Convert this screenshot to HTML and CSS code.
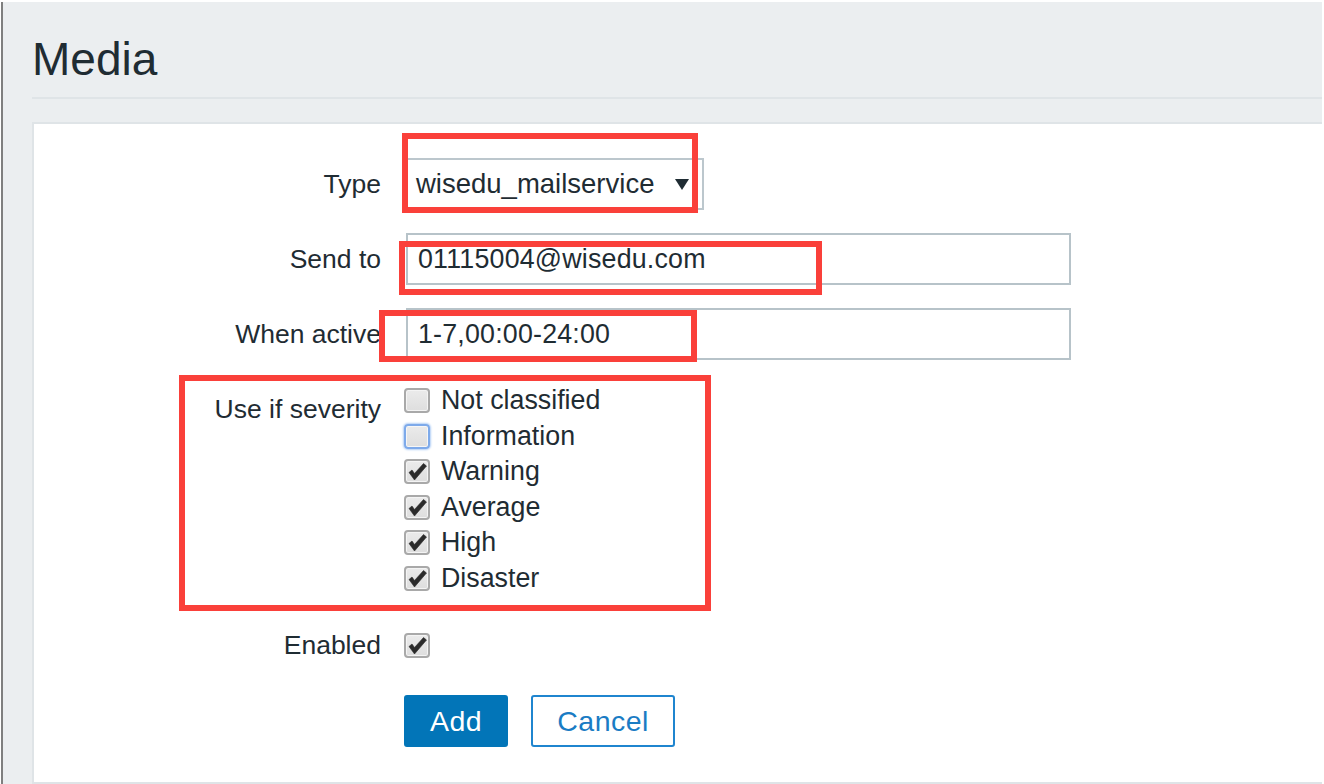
FILE: index.html
```html
<!DOCTYPE html>
<html>
<head>
  <meta charset="utf-8">
  <title>Media</title>
  <link rel="stylesheet" href="styles.css">
</head>
<body>
  <div class="page">
    <div class="header">
      <h1>Media</h1>
    </div>
    <div class="panel">
      <form class="form">
        <label class="lbl">Type</label>
        <div class="ctl">
          <div class="select">
            <span>wisedu_mailservice</span>
            <svg class="arrow" width="14" height="12" viewBox="0 0 14 12"><polygon points="0,1 14,1 7,12" fill="#1f2c33"/></svg>
          </div>
        </div>

        <label class="lbl">Send to</label>
        <div class="ctl"><input class="text" type="text" value="01115004@wisedu.com"></div>

        <label class="lbl">When active</label>
        <div class="ctl"><input class="text" type="text" value="1-7,00:00-24:00"></div>

        <label class="lbl">Use if severity</label>
        <ul class="severity">
          <li><span class="cb"></span>Not classified</li>
          <li><span class="cb focus"></span>Information</li>
          <li><span class="cb"><svg viewBox="2 2 22 21"><path d="M5 13.5 L8 11 L10.5 14.5 L19.5 4.5 L22.5 7 L10.5 21 Z"/></svg></span>Warning</li>
          <li><span class="cb"><svg viewBox="2 2 22 21"><path d="M5 13.5 L8 11 L10.5 14.5 L19.5 4.5 L22.5 7 L10.5 21 Z"/></svg></span>Average</li>
          <li><span class="cb"><svg viewBox="2 2 22 21"><path d="M5 13.5 L8 11 L10.5 14.5 L19.5 4.5 L22.5 7 L10.5 21 Z"/></svg></span>High</li>
          <li><span class="cb"><svg viewBox="2 2 22 21"><path d="M5 13.5 L8 11 L10.5 14.5 L19.5 4.5 L22.5 7 L10.5 21 Z"/></svg></span>Disaster</li>
        </ul>

        <label class="lbl">Enabled</label>
        <div class="ctl center">
          <span class="cb"><svg viewBox="2 2 22 21"><path d="M5 13.5 L8 11 L10.5 14.5 L19.5 4.5 L22.5 7 L10.5 21 Z"/></svg></span>
        </div>

        <div></div>
        <div class="buttons">
          <button type="button" class="btn btn-primary">Add</button>
          <button type="button" class="btn btn-alt">Cancel</button>
        </div>
      </form>
    </div>

    <!-- annotation boxes drawn over the form -->
    <div class="mark mark-type"></div>
    <div class="mark mark-send"></div>
    <div class="mark mark-when"></div>
    <div class="mark mark-severity"></div>
  </div>
</body>
</html>
```

FILE: styles.css
```css
html, body {
  margin: 0;
  padding: 0;
  background: #fff;
}
body {
  font-family: "Liberation Sans", Arial, sans-serif;
  color: #1f2c33;
}

.page {
  position: relative;
  margin: 2px 2px 0 1px;
  height: 782px;
  border-left: 2px solid #7f7f7f;
  background: #ebeef0;
  overflow: hidden;
}

.header {
  margin-left: 29px;
  padding: 34px 0 15px;
  border-bottom: 2px solid #dfe4e7;
}
.header h1 {
  margin: 0;
  font-size: 46px;
  line-height: 46px;
  font-weight: normal;
}

.panel {
  margin: 23px 0 0 29px;
  padding: 34px 0 35px;
  background: #fff;
  border: 2px solid #dfe4e7;
  border-right: none;
}

.form {
  display: grid;
  grid-template-columns: 347px 1fr;
  column-gap: 23px;
  row-gap: 23px;
  font-size: 26.5px;
}

.lbl {
  text-align: right;
  line-height: 52px;
  white-space: nowrap;
}

.ctl {
  display: flex;
  height: 52px;
}
.ctl.center {
  align-items: center;
}

.select {
  box-sizing: border-box;
  width: 300px;
  height: 52px;
  border: 2px solid #bcc7cd;
  padding: 0 13px 0 10px;
  display: flex;
  align-items: center;
  justify-content: space-between;
  font-size: 27.5px;
}

.text {
  box-sizing: border-box;
  width: 665px;
  height: 52px;
  margin: 0 0 0 2px;
  border: 2px solid #b7c3c9;
  border-radius: 0;
  padding: 0 10px;
  font-family: inherit;
  font-size: 26.8px;
  letter-spacing: 0.2px;
  color: #1f2c33;
  outline: none;
}

.severity {
  list-style: none;
  margin: 0;
  padding: 0;
  font-size: 26.8px;
}
.severity li {
  display: flex;
  align-items: center;
  gap: 11px;
  height: 35.5px;
}

.cb {
  box-sizing: border-box;
  width: 26px;
  height: 25px;
  border: 2px solid #a9a9a9;
  border-radius: 4px;
  background: linear-gradient(#ebebeb, #dedede);
  box-shadow: inset 0 0 0 1px #f4f4f4;
  display: inline-flex;
  flex: none;
}
.cb.focus {
  border-color: #7eaaea;
  box-shadow: 0 0 2px 1px #b4d0f6, inset 0 0 0 1px #f6f6f6;
}
.cb svg {
  width: 100%;
  height: 100%;
}
.cb path {
  fill: #2b2b2b;
  stroke: #2b2b2b;
  stroke-width: 0.6;
  stroke-linejoin: round;
}

.buttons {
  display: flex;
  gap: 23px;
  margin-top: 1px;
}

.btn {
  box-sizing: border-box;
  height: 52px;
  padding: 0 24px;
  border: 2px solid #0275b8;
  border-radius: 3px;
  font-family: inherit;
  font-size: 28.5px;
  letter-spacing: 0.5px;
  cursor: pointer;
}
.btn-primary {
  background: #0275b8;
  color: #fff;
}
.btn-alt {
  background: #fff;
  color: #1a7cc4;
  border-color: #1f85cf;
}

.mark {
  position: absolute;
  box-sizing: border-box;
  border: 6px solid #fa403a;
  pointer-events: none;
}
.mark-type {
  left: 399px;
  top: 131px;
  width: 296px;
  height: 80px;
}
.mark-send {
  left: 396px;
  top: 239px;
  width: 423px;
  height: 54px;
}
.mark-when {
  left: 376px;
  top: 308px;
  width: 318px;
  height: 52px;
}
.mark-severity {
  left: 176px;
  top: 373px;
  width: 532px;
  height: 236px;
}
```
